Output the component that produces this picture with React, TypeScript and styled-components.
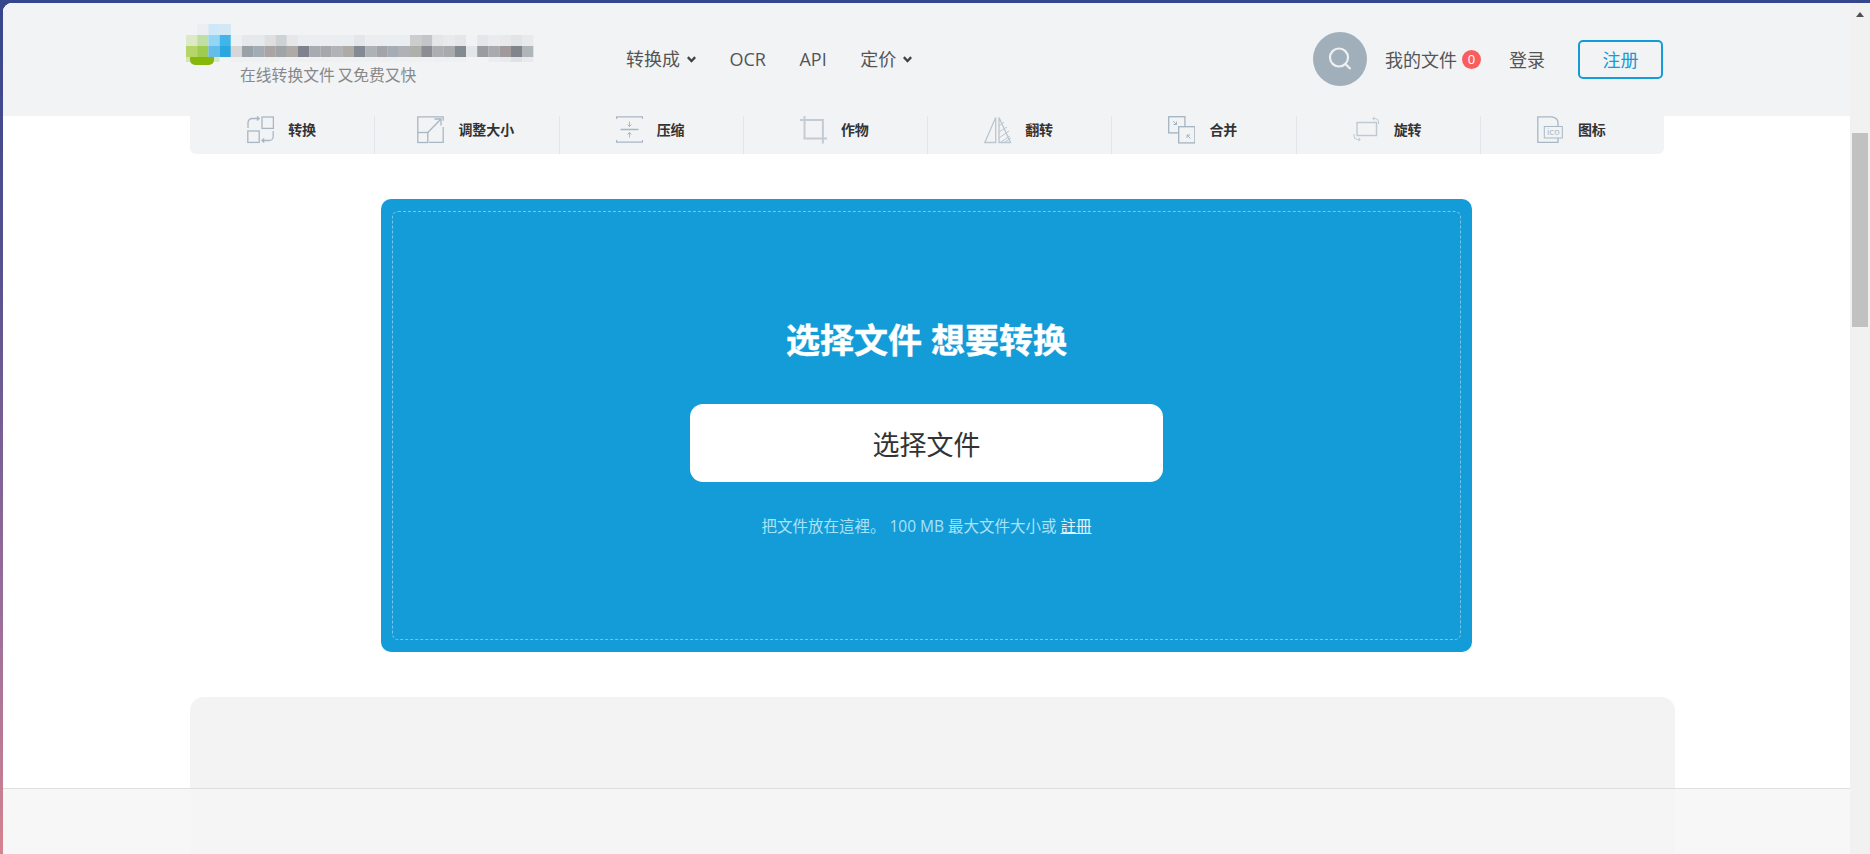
import React from "react";
import styled, { createGlobalStyle } from "styled-components";

const GlobalStyle = createGlobalStyle`
  html, body { margin: 0; padding: 0; height: 100%; overflow: hidden; }
  body { font-family: "Open Sans", "Noto Sans CJK SC", sans-serif; color: #555; }
`;

const Shell = styled.div`
  width: 1870px;
  height: 854px;
  padding: 3px 0 0 3px;
  box-sizing: border-box;
  background: linear-gradient(to bottom, #36468c 0%, #55508f 30%, #a0709a 75%, #d5838f 100%);
`;
const Frame = styled.div`
  display: flex;
  height: 851px;
  background: #fff;
  border-top-left-radius: 9px;
  overflow: hidden;
`;
const Page = styled.div`
  position: relative;
  flex: 1;
  min-width: 0;
  overflow: hidden;
  background: #fff;
`;
const Header = styled.header`
  display: flex;
  align-items: center;
  height: 113px;
  box-sizing: border-box;
  padding: 0 187px 1px 183px;
  background: #f1f3f5;
`;
const Brand = styled.a`
  display: flex;
  flex-direction: column;
  flex: 0 0 440px;
  height: 113px;
  margin-bottom: -1px;
  padding-top: 21px;
  box-sizing: border-box;
`;
const Slogan = styled.span`
  margin: -5px 0 0 54px;
  font-size: 15.8px;
  line-height: 24px;
  word-spacing: -1.5px;
  color: #888;
  white-space: nowrap;
`;
const Nav = styled.nav`
  display: flex;
  align-items: center;
  gap: 33.5px;
`;
const NavItem = styled.a`
  display: flex;
  align-items: center;
  gap: 7px;
  font-size: 18px;
  line-height: 24px;
  color: #555;
`;
const Actions = styled.div`
  display: flex;
  align-items: center;
  margin-left: auto;
`;
const SearchButton = styled.button`
  display: flex;
  align-items: center;
  justify-content: center;
  width: 54px;
  height: 54px;
  margin-right: 18px;
  padding: 0;
  border: 0;
  border-radius: 50%;
  background: #a1afbb;
`;
const Files = styled.a`
  display: flex;
  align-items: center;
  gap: 5px;
  font-size: 18px;
  color: #555;
  margin-right: 28px;
`;
const Badge = styled.span`
  display: flex;
  align-items: center;
  justify-content: center;
  width: 19px;
  height: 19px;
  border-radius: 50%;
  background: #f95e5e;
  color: #fff;
  font-size: 13px;
  line-height: 19px;
`;
const Login = styled.a`
  font-size: 18px;
  color: #555;
  margin-right: 33px;
`;
const Register = styled.a`
  display: flex;
  align-items: center;
  justify-content: center;
  width: 85px;
  height: 39px;
  box-sizing: border-box;
  border: 2px solid #149cd8;
  border-radius: 5px;
  font-size: 18px;
  color: #149cd8;
`;
const Tabs = styled.div`
  display: grid;
  grid-template-columns: repeat(8, 1fr);
  width: 1474px;
  height: 38px;
  margin-left: 187px;
  background: #f1f3f5;
  border-radius: 0 0 6px 6px;
`;
const Tab = styled.a<{ $first?: boolean }>`
  display: flex;
  align-items: flex-start;
  justify-content: center;
  gap: 14px;
  padding-right: 2px;
  border-left: 1px solid ${(p) => (p.$first ? "transparent" : "#e3e6e9")};
  svg { flex: none; }
`;
const TabLabel = styled.span`
  font-size: 14px;
  font-weight: 700;
  line-height: 28px;
  color: #333;
`;
const Card = styled.section`
  width: 1091px;
  height: 453px;
  margin: 45px auto 0;
  padding: 12px 11px;
  box-sizing: border-box;
  background: #149cd8;
  border-radius: 10px;
`;
const DropArea = styled.div`
  display: flex;
  flex-direction: column;
  align-items: center;
  height: 100%;
  padding-top: 106px;
  box-sizing: border-box;
  border: 1px dashed rgba(255, 255, 255, 0.42);
  border-radius: 6px;
`;
const Title = styled.h1`
  margin: 0;
  font-size: 34px;
  font-weight: 700;
  line-height: 44px;
  color: #fff;
  -webkit-text-stroke: 0.4px #fff;
`;
const PickButton = styled.button`
  width: 473px;
  height: 78px;
  margin-top: 42px;
  padding: 0;
  border: 0;
  border-radius: 13px;
  background: #fff;
  font-family: inherit;
  font-size: 27px;
  color: #333;
`;
const Hint = styled.p`
  margin: 33px 0 0;
  font-size: 15.5px;
  font-weight: 400;
  line-height: 22px;
  color: #a8e2f6;
`;
const HintLink = styled.a`
  color: #e2f5fc;
  text-decoration: underline;
`;
const GreySection = styled.section`
  width: 1485px;
  height: 300px;
  margin: 45px 0 0 187px;
  background: #f3f3f3;
  border-radius: 14px 14px 0 0;
`;
const BottomBar = styled.div`
  position: absolute;
  left: 0;
  right: 0;
  bottom: 0;
  height: 66px;
  box-sizing: border-box;
  border-top: 1px solid #dfdfdf;
  background: rgba(245, 245, 245, 0.83);
`;
const Scrollbar = styled.div`
  display: flex;
  flex-direction: column;
  align-items: center;
  flex: 0 0 20px;
  background: #f1f1f1;
`;
const ScrollArrow = styled.span`
  width: 0;
  height: 0;
  margin-top: 9px;
  border-left: 4.5px solid transparent;
  border-right: 4.5px solid transparent;
  border-bottom: 5px solid #505050;
`;
const ScrollThumb = styled.span`
  width: 16px;
  height: 194px;
  margin-top: 116px;
  background: #c1c1c1;
`;

const CELL = 11.2;
const row1 = { 1: "eceff1", 2: "cfe8f7", 3: "d2e8f4" } as Record<number, string>;
const row2 = "dcebc5 bfdfa3 93d5f5 40b5ea eef1f3 e6e8eb e6e9ec e0dfe0 cfd2d5 e6e7e9 ebeef0 ebeef0 ebeef0 ebeef0 ebeef0 e4e6e9 ebeef0 ebeef0 ebeef0 ebeef0 cdcdd0 c3c5c9 e4e6e8 e8eaec e4e6e8 f0f2f4 e4e6e9 e9ebed e8e9eb e2e4e8 e8eaec".split(" ");
const row3 = "b5d568 9fcc50 64bce8 2ba7e0 d6d6d6 9aa0a8 a2acb4 aaa4a4 a0a4a6 aeaaa6 7e828c a8acb0 a6a8ac b0b4b8 aeaaa6 848a92 acb2b6 a2a4a8 a6acb4 aeb2b6 aeb0aa 8a8e94 acaeb2 a8aaac 848a92 e2e6ea 9a9ca2 a8aaae a09a9a 80848c aeb6ba".split(" ");
const row4 = "d5e5b0 d0e5a8 d8e8b8 f1f3f5 eef0f2 eef0f2 eef0f2 eef0f2 eef0f2 eef0f2 eef0f2 eef0f2 eef0f2 eef0f2 eef0f2 eef0f2 eef0f2 eef0f2 eef0f2 eef0f2 eef0f2 eef0f2 eef0f2 eef0f2 eef0f2 f1f3f5 f1f3f5 ebedef e8eaed dfe1e5 e8eaed".split(" ");

const LogoMosaic = () => (
  <svg width="348" height="44" viewBox="0 0 348 44" style={{ display: "block", overflow: "visible" }}>
    {Object.entries(row1).map(([c, col]) => (
      <rect key={c} x={+c * CELL} y="0" width={CELL + 0.1} height="11" fill={`#${col}`} />
    ))}
    {row2.map((col, i) => <rect key={i} x={i * CELL} y="11" width={CELL + 0.1} height="11" fill={`#${col}`} />)}
    {row3.map((col, i) => <rect key={i} x={i * CELL} y="22" width={CELL + 0.1} height="11" fill={`#${col}`} />)}
    {row4.map((col, i) => <rect key={i} x={i * CELL} y="33" width={CELL + 0.1} height="5" fill={`#${col}`} />)}
    <path d="M4 33h24v3a5 5 0 0 1-5 5H9a5 5 0 0 1-5-5z" fill="#86b80a" />
  </svg>
);

const Chevron = () => (
  <svg width="9" height="7" viewBox="0 0 9 7" fill="none" stroke="#444" strokeWidth="2.4">
    <path d="M0.8 1.2l3.7 3.8 3.7-3.8" />
  </svg>
);

const ICON = "#a9b7c4";
const IconBox: React.FC<{ children: React.ReactNode; stroke?: string; width?: number }> = ({ children, stroke = ICON, width = 1.3 }) => (
  <svg width="27" height="28" viewBox="0 0 27 28" fill="none" stroke={stroke} strokeWidth={width}>{children}</svg>
);

const ConvertIcon = () => (
  <IconBox>
    <rect x="15" y="1" width="11.4" height="11.4" />
    <rect x="0.8" y="15" width="11.4" height="11.4" />
    <path d="M1 12V6.5a4 4 0 0 1 4-4h7M10 0.5l2.2 2-2.2 2" />
    <path d="M26.2 15v5.5a4 4 0 0 1-4 4h-7M17.2 22.5l-2.2 2 2.2 2" />
  </IconBox>
);
const ResizeIcon = () => (
  <IconBox>
    <path d="M0.8 16V0.8H26.2v4M26.2 11v15.4H12" />
    <rect x="0.8" y="16.5" width="10" height="10" />
    <path d="M10.8 16.5L24 3M17.5 3H24v6.5" />
  </IconBox>
);
const CompressIcon = () => (
  <IconBox>
    <path d="M0.6 3V0.8h26V3M0.6 24v2.2h26V24M4.5 13.5h18" />
    <path d="M13.5 5.5v5M11.5 8.5l2 2 2-2M13.5 21.5v-5M11.5 18.5l2-2 2 2" strokeWidth="1" />
  </IconBox>
);
const CropIcon = () => (
  <IconBox stroke="#c3ccd4" width={2}>
    <path d="M4.5 0v22.4H27M0 4h22.9v23.5" />
  </IconBox>
);
const FlipIcon = () => (
  <IconBox stroke="#bcc6ce" width={1.3}>
    <path d="M11.7 1.5v25H0.8z" />
    <path d="M15 1.5v25h11.5z" />
    <path d="M15 10l5-4M15 16l8-5M15 22l10-7M17 26l9-6M21 26l6-4" strokeWidth="1" />
  </IconBox>
);
const MergeIcon = () => (
  <IconBox stroke="#a4b3c1">
    <rect x="0.7" y="0.7" width="16.2" height="16.2" />
    <rect x="10.7" y="10.7" width="16.2" height="16.2" fill="#f1f3f5" />
    <path d="M5 5l3.5 3.5M8.5 5.5v3H5.5M22.5 22.5L19 19M19 22v-3h3" strokeWidth="1" />
  </IconBox>
);
const RotateIcon = () => (
  <IconBox stroke="#bfc9d1" width={1.4}>
    <rect x="4" y="6.5" width="19.5" height="13" />
    <path d="M20 2.5h2a3.5 3.5 0 0 1 3.5 3.5v2M21.5 0.8L19.7 2.5l1.8 1.7" strokeWidth="1" />
    <path d="M7 23.5H4.5A3.5 3.5 0 0 1 1 20v-2M5.5 21.8l1.8 1.7-1.8 1.7" strokeWidth="1" />
  </IconBox>
);
const IcoIcon = () => (
  <IconBox>
    <path d="M21 10V6.5a9 6 0 0 0-6-5.7H0.8v25.6H21V22" />
    <rect x="7.3" y="10.5" width="18" height="11.5" fill="#f1f3f5" strokeWidth="1" />
    <text x="16.3" y="19.3" textAnchor="middle" fontSize="9.5" fill={ICON} stroke="none" fontFamily="Open Sans, sans-serif">ico</text>
  </IconBox>
);

const tabs: { label: string; Icon: React.FC }[] = [
  { label: "转换", Icon: ConvertIcon },
  { label: "调整大小", Icon: ResizeIcon },
  { label: "压缩", Icon: CompressIcon },
  { label: "作物", Icon: CropIcon },
  { label: "翻转", Icon: FlipIcon },
  { label: "合并", Icon: MergeIcon },
  { label: "旋转", Icon: RotateIcon },
  { label: "图标", Icon: IcoIcon },
];

export default function App() {
  return (
    <>
      <GlobalStyle />
      <Shell>
        <Frame>
          <Page>
            <Header>
              <Brand>
                <LogoMosaic />
                <Slogan>在线转换文件 又免费又快</Slogan>
              </Brand>
              <Nav>
                <NavItem>转换成 <Chevron /></NavItem>
                <NavItem>OCR</NavItem>
                <NavItem>API</NavItem>
                <NavItem>定价 <Chevron /></NavItem>
              </Nav>
              <Actions>
                <SearchButton aria-label="搜索">
                  <svg width="26" height="26" viewBox="0 0 26 26" fill="none" stroke="#eef1f3" strokeWidth="2.2">
                    <circle cx="12" cy="11.5" r="9" />
                    <path d="M18.5 18l5 5" />
                  </svg>
                </SearchButton>
                <Files>我的文件<Badge>0</Badge></Files>
                <Login>登录</Login>
                <Register>注册</Register>
              </Actions>
            </Header>
            <Tabs>
              {tabs.map(({ label, Icon }, i) => (
                <Tab key={label} $first={i === 0}>
                  <Icon />
                  <TabLabel>{label}</TabLabel>
                </Tab>
              ))}
            </Tabs>
            <Card>
              <DropArea>
                <Title>选择文件 想要转换</Title>
                <PickButton>选择文件</PickButton>
                <Hint>把文件放在這裡。 100 MB 最大文件大小或 <HintLink>註冊</HintLink></Hint>
              </DropArea>
            </Card>
            <GreySection />
            <BottomBar />
          </Page>
          <Scrollbar>
            <ScrollArrow />
            <ScrollThumb />
          </Scrollbar>
        </Frame>
      </Shell>
    </>
  );
}
